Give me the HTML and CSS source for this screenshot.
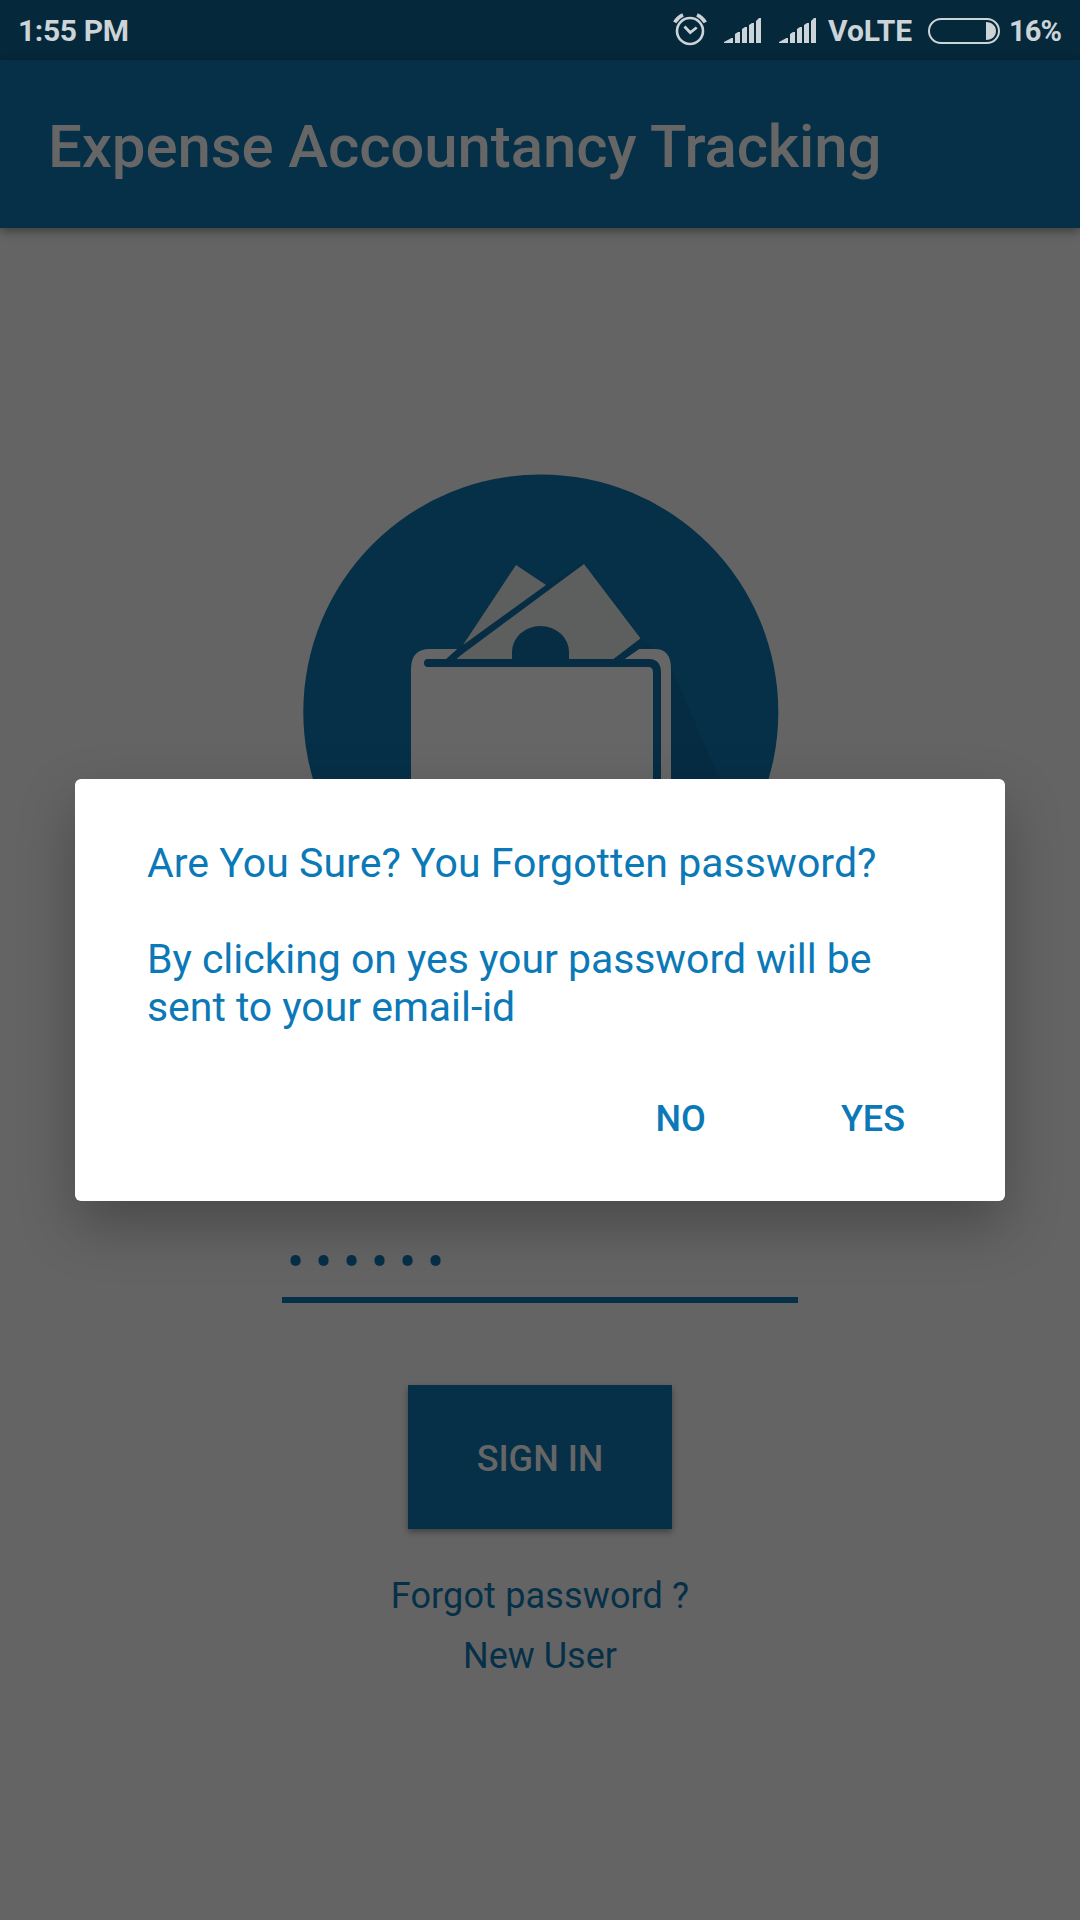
FILE: index.html
```html
<!DOCTYPE html>
<html lang="en">
<head>
<meta charset="utf-8">
<title>Expense Accountancy Tracking</title>
<link rel="stylesheet" href="styles.css">
</head>
<body>
<div class="screen">
  <div class="status-bar">
    <span class="clock">1:55 PM</span>
    <svg class="alarm" width="34" height="34" viewBox="0 0 34 34" fill="none" stroke="#ccd4d8">
      <circle cx="17" cy="18" r="13" stroke-width="2.6"/>
      <path d="M11.500 13.500l5.700 6 6.500-5" stroke-width="2.8"/>
      <path d="M1.700 9.400Q4.500 4.300 10 1.800M32.300 9.400Q29.500 4.300 24 1.800" stroke-width="3.600"/>
    </svg>
    <svg class="signal" width="38" height="26" viewBox="0 0 38 26" fill="#ccd4d8">
      <path d="M0 25v-1l7.500-4H9v5zM11 25V16l3-2h2v11zM18 25V11l3-2h2v16zM25 25V7l3-2h2v20zM32 25V3l3-3h2v25z"/>
    </svg>
    <svg class="signal signal-second" width="38" height="26" viewBox="0 0 38 26" fill="#ccd4d8">
      <path d="M0 25v-1l7.500-4H9v5zM11 25V16l3-2h2v11zM18 25V11l3-2h2v16zM25 25V7l3-2h2v20zM32 25V3l3-3h2v25z"/>
    </svg>
    <span class="network">VoLTE</span>
    <svg class="battery" width="72" height="26" viewBox="0 0 72 26">
      <rect x="1" y="1" width="70" height="24" rx="12" fill="none" stroke="#ccd4d8" stroke-width="2"/>
      <path d="M58 4c6 0 10 4 10 9s-4 9-10 9z" fill="#ccd4d8"/>
    </svg>
    <span class="percent">16%</span>
  </div>
  <header class="app-bar"><h1 class="app-title">Expense Accountancy Tracking</h1></header>
  <main class="login">
    <svg class="logo" width="476" height="476" viewBox="303 474 476 476">
      <circle cx="540.800" cy="712" r="237.500" fill="#063048"/>
      <path d="M642 638L671 667 780 920 671 920z" fill="#062c43"/>
      <path d="M430 649h225q16 0 16 20v230H411V669q0-20 19-20z" fill="#666"/>
      <path d="M445 660L464 643 546 585 584 563 641 638 613 660z" fill="#062d44"/>
      <path d="M516 565l30 20-83 60z" fill="#5d5f5e"/>
      <path d="M584 564l57 75-28 20.500H455z" fill="#5d5f5e"/>
      <path d="M446 659.500L463 647 469 647 456 659.500zM613 659.500L641 638 648 643 624 659.500z" fill="#062d44"/>
      <path d="M512 662v-10a28.500 26 0 0 1 57 0v10z" fill="#062d44"/>
      <path d="M428 663h221q8 0 8 10v230" fill="none" stroke="#062d44" stroke-width="8" stroke-linecap="round"/>
    </svg>
    <div class="password-field">••••••</div>
    <button class="sign-in">SIGN IN</button>
    <a class="link link-forgot">Forgot password ?</a>
    <a class="link">New User</a>
  </main>
  <section class="dialog" role="dialog">
    <p class="message question">Are You Sure? You Forgotten password?</p>
    <p class="message">By clicking on yes your password will be<br>sent to your email-id</p>
    <div class="actions">
      <span class="action action-no">NO</span>
      <span class="action">YES</span>
    </div>
  </section>
</div>
</body>
</html>
```
FILE: styles.css
```css
* { box-sizing: border-box; }

body {
  margin: 0;
  font-family: Roboto, sans-serif;
}

.screen {
  position: relative;
  display: flex;
  flex-direction: column;
  width: 1080px;
  height: 1920px;
  overflow: hidden;
  background: #646464;
}

.status-bar {
  display: flex;
  align-items: center;
  height: 60px;
  padding: 1px 0 0 18px;
  background: #05283a;
  color: #ccd4d8;
  font-size: 30px;
  font-weight: 700;
  line-height: 60px;
  white-space: nowrap;
}

.status-bar > * { flex-shrink: 0; }

.clock {
  width: 655px;
  letter-spacing: -.35px;
}

.alarm { margin: 0 17px 1px 0; }
.signal { margin-top: 1px; }
.signal-second { margin-left: 17px; }
.network { width: 100px; padding-left: 11px; }
.battery { margin-left: 11px; }

.percent {
  margin-left: 9px;
  font-size: 29px;
  letter-spacing: -.9px;
}

.app-bar {
  display: flex;
  z-index: 1;
  align-items: center;
  height: 168px;
  padding: 4px 48px 0;
  background: #063048;
  box-shadow: 0 3px 10px rgba(0, 0, 0, .4);
}

.app-title {
  margin: 0;
  color: #666;
  font-size: 60px;
  font-weight: 500;
  letter-spacing: -.12px;
  white-space: nowrap;
}

.login {
  display: flex;
  flex-direction: column;
  align-items: center;
  padding-top: 246px;
}

.logo { margin-left: 2px; }

.password-field {
  width: 516px;
  height: 73px;
  margin-top: 280px;
  padding-left: 5px;
  border-bottom: 6px solid #063048;
  color: #063048;
  font-size: 51px;
  line-height: 65px;
  letter-spacing: 10.8px;
}

.sign-in {
  width: 264px;
  height: 144px;
  margin: 82px 0 37px;
  padding: 4px 0 0;
  border: 0;
  background: #063048;
  box-shadow: 0 3px 6px rgba(0, 0, 0, .35);
  color: #666;
  font: 500 36px Roboto, sans-serif;
}

.link {
  color: #063048;
  font-size: 36px;
  line-height: 60px;
}

.link-forgot { letter-spacing: .15px; }

.dialog {
  position: absolute;
  z-index: 2;
  top: 779px;
  left: 75px;
  width: 930px;
  height: 422px;
  padding: 60px 72px 0;
  border-radius: 6px;
  background: #fff;
  box-shadow: 0 24px 56px rgba(0, 0, 0, .27);
  color: #0b79b7;
}

.message {
  margin: 0 0 48px;
  font-size: 41px;
  letter-spacing: -.05px;
  line-height: 48px;
  white-space: nowrap;
}

.question { letter-spacing: .05px; }

.actions {
  display: flex;
  justify-content: flex-end;
  padding: 16px 28px 0 0;
  font-size: 36px;
  font-weight: 500;
  line-height: 48px;
}

.action-no { margin-right: 135px; }
```
